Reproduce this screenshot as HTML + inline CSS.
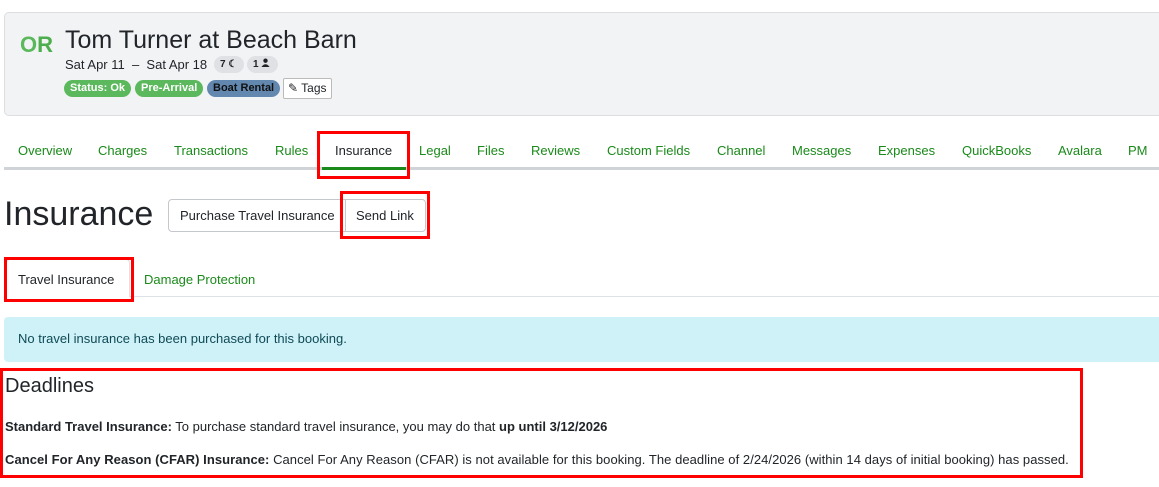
<!DOCTYPE html>
<html><head><style>
*{box-sizing:border-box;margin:0;padding:0}
body{width:1159px;height:487px;overflow:hidden;background:#fff;font-family:"Liberation Sans",Arial,sans-serif;color:#212529;position:relative}
.a{position:absolute;white-space:nowrap}
.hdr{left:4px;top:12px;width:1165px;height:104px;background:#f2f3f5;border:1px solid #dcdee2;border-radius:5px}
.badge{position:absolute;top:80px;height:17px;border-radius:9px;font-size:11px;font-weight:bold;line-height:17px;padding:0 6px}
.nav{top:143px;font-size:13px;color:#1a8a1a}
.red{position:absolute;border:3px solid #f00}
</style></head><body>
<div class="a hdr"></div>
<div class="a" style="left:20px;top:32px;font-size:22px;font-weight:bold;color:#5cb85c;letter-spacing:0px">O<span style="color:#4cae4c">R</span></div>
<div class="a" style="left:65px;top:26px;font-size:25px;color:#212529">Tom Turner at Beach Barn</div>
<div class="a" style="left:65px;top:57px;font-size:13px">Sat Apr 11 &nbsp;–&nbsp; Sat Apr 18</div>
<div class="badge" style="left:214px;top:56px;width:30px;background:#dfe1e5;color:#222;font-size:10px">7 ☾</div>
<div class="badge" style="left:247px;top:56px;width:31px;background:#dfe1e5;color:#222;font-size:10px">1 <svg width="9" height="9" viewBox="0 0 10 10"><circle cx="5" cy="3" r="2.4" fill="#222"/><path d="M0.5 10 Q5 4 9.5 10Z" fill="#222"/></svg></div>
<div class="badge" style="left:64px;background:#5cb85c;color:#fff">Status: Ok</div>
<div class="badge" style="left:135px;background:#5cb85c;color:#fff">Pre-Arrival</div>
<div class="badge" style="left:207px;background:#6388b0;color:#111">Boat Rental</div>
<div class="a" style="left:283px;top:78px;height:21px;width:49px;border:1px solid #bbb;background:#fff;border-radius:2px;font-size:12px;line-height:19px;padding-left:4px">✎ Tags</div>

<div class="a" style="left:4px;top:167px;width:1155px;height:3px;background:#d0d3d8"></div>
<div class="a" style="left:322px;top:167px;width:84px;height:3px;background:#1a8a1a"></div>
<div class="a nav" style="left:18px">Overview</div>
<div class="a nav" style="left:98px">Charges</div>
<div class="a nav" style="left:174px">Transactions</div>
<div class="a nav" style="left:275px">Rules</div>
<div class="a nav" style="left:335px;color:#212529">Insurance</div>
<div class="a nav" style="left:419px">Legal</div>
<div class="a nav" style="left:477px">Files</div>
<div class="a nav" style="left:531px">Reviews</div>
<div class="a nav" style="left:607px">Custom Fields</div>
<div class="a nav" style="left:717px">Channel</div>
<div class="a nav" style="left:792px">Messages</div>
<div class="a nav" style="left:878px">Expenses</div>
<div class="a nav" style="left:962px">QuickBooks</div>
<div class="a nav" style="left:1058px">Avalara</div>
<div class="a nav" style="left:1128px">PM</div>
<div class="red" style="left:317px;top:131px;width:93px;height:48px"></div>

<div class="a" style="left:4px;top:195px;font-size:34px;color:#212529">Insurance</div>
<div class="a" style="left:168px;top:199px;width:258px;height:33px;border:1px solid #c4c8cd;border-radius:4px;background:#fff"></div>
<div class="a" style="left:345px;top:199px;width:1px;height:33px;background:#c4c8cd"></div>
<div class="a" style="left:180px;top:208px;font-size:13px">Purchase Travel Insurance</div>
<div class="a" style="left:356px;top:208px;font-size:13px">Send Link</div>
<div class="red" style="left:340px;top:191px;width:90px;height:48px"></div>

<div class="a" style="left:4px;top:296px;width:1155px;height:1px;background:#dee2e6"></div>
<div class="a" style="left:6px;top:259px;width:124px;height:38px;border:1px solid #dee2e6;border-bottom:none;background:#fff;border-radius:4px 4px 0 0"></div>
<div class="a" style="left:18px;top:272px;font-size:13px">Travel Insurance</div>
<div class="a" style="left:144px;top:272px;font-size:13px;color:#1a8a1a">Damage Protection</div>
<div class="red" style="left:4px;top:257px;width:130px;height:45px"></div>

<div class="a" style="left:4px;top:317px;width:1160px;height:45px;background:#cff2f9;border-radius:4px"></div>
<div class="a" style="left:18px;top:331px;font-size:13px;color:#0f4a55">No travel insurance has been purchased for this booking.</div>

<div class="red" style="left:0;top:368px;width:1083px;height:110px"></div>
<div class="a" style="left:5px;top:375px;font-size:20px">Deadlines</div>
<div class="a" style="left:5px;top:419px;font-size:13px"><b>Standard Travel Insurance:</b> To purchase standard travel insurance, you may do that <b>up until 3/12/2026</b></div>
<div class="a" style="left:5px;top:452px;font-size:13px;letter-spacing:0.05px"><b>Cancel For Any Reason (CFAR) Insurance:</b> Cancel For Any Reason (CFAR) is not available for this booking. The deadline of 2/24/2026 (within 14 days of initial booking) has passed.</div>
</body></html>
